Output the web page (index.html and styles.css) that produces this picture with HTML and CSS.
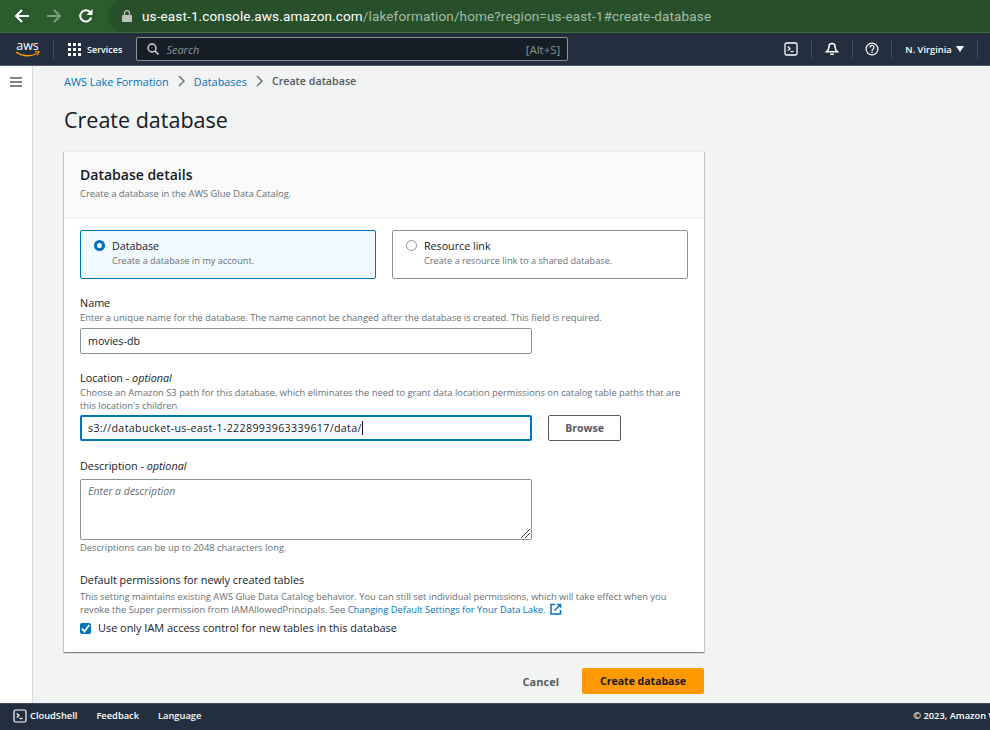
FILE: index.html
```html
<!DOCTYPE html>
<html lang="en">
<head>
<meta charset="utf-8">
<title>Create database</title>
<link rel="stylesheet" href="styles.css">
</head>
<body>
<div class="chrome">
  <svg class="chrome-ico back" width="16" height="16" viewBox="0 0 16 16"><path d="M15 8H2M8 2L2 8l6 6" fill="none" stroke="#fff" stroke-width="2"/></svg>
  <svg class="chrome-ico fwd" width="16" height="16" viewBox="0 0 16 16"><path d="M1 8h13M8 2l6 6-6 6" fill="none" stroke="#7d9b80" stroke-width="2"/></svg>
  <svg class="chrome-ico reload" width="16" height="16" viewBox="0 0 16 16"><path d="M13.2 9.5A5.6 5.6 0 1 1 12 4.2" fill="none" stroke="#fff" stroke-width="2"/><path d="M14.5 1v6h-6z" fill="#fff"/></svg>
  <div class="omnibox">
    <svg width="10" height="12" viewBox="0 0 10 12"><path d="M1 5h8a1 1 0 0 1 1 1v5a1 1 0 0 1-1 1H1a1 1 0 0 1-1-1V6a1 1 0 0 1 1-1z" fill="#b8c4b9"/><path d="M2.5 5V3.2a2.5 2.5 0 0 1 5 0V5" fill="none" stroke="#b8c4b9" stroke-width="1.3"/></svg>
    <span class="url"><span class="host">us-east-1.console.aws.amazon.com</span>/lakeformation/home?region=us-east-1#create-database</span>
  </div>
</div>
<header class="nav">
  <div class="aws">
    <span class="aws-word">aws</span>
    <svg class="aws-smile" width="25" height="7" viewBox="0 0 25 7"><path d="M1 1c6 4.500 15 5 21 1.500" fill="none" stroke="#f90" stroke-width="1.400"/><path d="M20 .8l4-.3-1.500 3.700" fill="none" stroke="#f90" stroke-width="1.200"/></svg>
  </div>
  <span class="nav-sep sep-a"></span>
  <svg class="grid-ico" width="13" height="13" viewBox="0 0 13 13"><g fill="#fff"><rect width="3" height="3"/><rect x="5" width="3" height="3"/><rect x="10" width="3" height="3"/><rect y="5" width="3" height="3"/><rect x="5" y="5" width="3" height="3"/><rect x="10" y="5" width="3" height="3"/><rect y="10" width="3" height="3"/><rect x="5" y="10" width="3" height="3"/><rect x="10" y="10" width="3" height="3"/></g></svg>
  <span class="services">Services</span>
  <div class="search">
    <svg width="12" height="12" viewBox="0 0 12 12"><circle cx="5" cy="5" r="4" fill="none" stroke="#d5dbdb" stroke-width="1.400"/><path d="M8 8l3.500 3.500" stroke="#d5dbdb" stroke-width="1.500"/></svg>
    <span class="search-ph">Search</span>
    <span class="search-key">[Alt+S]</span>
  </div>
  <div class="nav-right">
    <span class="nav-item item-shell">
      <svg width="14" height="14" viewBox="0 0 14 14"><rect x="1" y="1" width="12" height="12" rx="1.500" fill="none" stroke="#fff" stroke-width="1.300"/><path d="M3.800 4.500L6 6.500 3.800 8.500" fill="none" stroke="#fff" stroke-width="1.200"/><path d="M6.500 9.500h3" stroke="#fff" stroke-width="1.200"/></svg>
    </span>
    <span class="nav-sep"></span>
    <span class="nav-item item-bell">
      <svg width="14" height="14" viewBox="0 0 14 14"><path d="M7 1.500a3 3 0 0 1 3 3c0 3 .8 4 2.300 5.200H1.700C3.200 8.500 4 7.500 4 4.500a3 3 0 0 1 3-3z" fill="none" stroke="#fff" stroke-width="1.500"/><path d="M5.200 11.500h3.600v1.500H5.200z" fill="#fff"/></svg>
    </span>
    <span class="nav-sep"></span>
    <span class="nav-item item-help">
      <svg width="14" height="14" viewBox="0 0 14 14"><circle cx="7" cy="7" r="5.900" fill="none" stroke="#fff" stroke-width="1.200"/><path d="M5 5.500a2 2 0 1 1 3 1.700c-.7.400-1 .8-1 1.500" fill="none" stroke="#fff" stroke-width="1.300"/><rect x="6.300" y="9.600" width="1.400" height="1.400" fill="#fff"/></svg>
    </span>
    <span class="nav-sep"></span>
    <span class="region">N. Virginia<svg class="caret" width="8" height="6" viewBox="0 0 8 6"><path d="M0 0h8L4 6z" fill="#fff"/></svg></span>
    <span class="nav-sep"></span>
  </div>
</header>
<div class="body-row">
  <aside class="side">
    <svg width="12" height="10" viewBox="0 0 12 10"><path d="M0 1h12M0 5h12M0 9h12" stroke="#545b64" stroke-width="1.600"/></svg>
  </aside>
  <main class="main">
    <nav class="crumbs">
      <a class="crumb-link">AWS Lake Formation</a>
      <svg class="chev" width="7" height="12" viewBox="0 0 7 12"><path d="M1 1l5 5-5 5" fill="none" stroke="#687078" stroke-width="1.500"/></svg>
      <a class="crumb-link">Databases</a>
      <svg class="chev" width="7" height="12" viewBox="0 0 7 12"><path d="M1 1l5 5-5 5" fill="none" stroke="#687078" stroke-width="1.500"/></svg>
      <span class="crumb-cur">Create database</span>
    </nav>
    <h1 class="title">Create database</h1>
    <section class="card">
      <div class="card-head">
        <h2 class="card-title">Database details</h2>
        <p class="hint">Create a database in the AWS Glue Data Catalog.</p>
      </div>
      <div class="card-body">
        <div class="tiles">
          <div class="tile tile-on">
            <span class="radio radio-on"></span>
            <div><div class="tile-label">Database</div><div class="hint tile-hint">Create a database in my account.</div></div>
          </div>
          <div class="tile">
            <span class="radio"></span>
            <div><div class="tile-label">Resource link</div><div class="hint tile-hint">Create a resource link to a shared database.</div></div>
          </div>
        </div>
        <div class="field f-name">
          <div class="label">Name</div>
          <p class="hint">Enter a unique name for the database. The name cannot be changed after the database is created. This field is required.</p>
          <div class="input">movies-db</div>
        </div>
        <div class="field f-loc">
          <div class="label">Location - <i>optional</i></div>
          <p class="hint">Choose an Amazon S3 path for this database, which eliminates the need to grant data location permissions on catalog table paths that are<br>this location's children</p>
          <div class="loc-row">
            <div class="input input-focus">s3://databucket-us-east-1-2228993963339617/data/<span class="cursor"></span></div>
            <span class="btn-browse">Browse</span>
          </div>
        </div>
        <div class="field f-desc">
          <div class="label">Description - <i>optional</i></div>
          <div class="textarea">Enter a description
            <svg class="grip" width="9" height="9" viewBox="0 0 9 9"><path d="M0 9l9-9M4 9l5-5" stroke="#444" stroke-width="1"/></svg>
          </div>
          <p class="hint d-hint">Descriptions can be up to 2048 characters long.</p>
        </div>
        <div class="field f-perm">
          <div class="label">Default permissions for newly created tables</div>
          <p class="hint">This setting maintains existing AWS Glue Data Catalog behavior. You can still set individual permissions, which will take effect when you<br>revoke the Super permission from IAMAllowedPrincipals. See <a class="link">Changing Default Settings for Your Data Lake.</a>
            <svg class="ext" width="12" height="12" viewBox="0 0 12 12"><path d="M5 1.500H1v9.500h9.500V7" fill="none" stroke="#0073bb" stroke-width="1.500"/><path d="M4.500 7.500L10 2" stroke="#0073bb" stroke-width="1.500"/><path d="M6.500 .7h4.800v4.800z" fill="#0073bb"/></svg>
          </p>
          <div class="check-row">
            <span class="check"><svg width="11" height="11" viewBox="0 0 11 11"><path d="M1.800 5.500L4.500 8.500 9.200 2" fill="none" stroke="#fff" stroke-width="1.800"/></svg></span>
            <span class="check-label">Use only IAM access control for new tables in this database</span>
          </div>
        </div>
      </div>
    </section>
    <div class="actions">
      <span class="btn-cancel">Cancel</span>
      <span class="btn-primary">Create database</span>
    </div>
  </main>
</div>
<footer class="foot">
  <span class="foot-shell">
    <svg width="14" height="14" viewBox="0 0 14 14"><rect x="1" y="1" width="12" height="12" rx="1.500" fill="none" stroke="#fff" stroke-width="1.200"/><path d="M3.800 4.500L6 6.500 3.800 8.500" fill="none" stroke="#fff" stroke-width="1.200"/><path d="M6.500 9.500h3" stroke="#fff" stroke-width="1.200"/></svg>
    CloudShell
  </span>
  <span class="foot-link">Feedback</span>
  <span class="foot-link">Language</span>
  <span class="copy">© 2023, Amazon Web Services, Inc. or its affiliates.</span>
</footer>
</body>
</html>
```
FILE: styles.css
```css
* { box-sizing: border-box; }
html, body { margin: 0; padding: 0; }
body {
  width: 990px; height: 730px; overflow: hidden;
  display: flex; flex-direction: column;
  font-family: "Open Sans", "Noto Sans", sans-serif;
  color: #16191f; background: #f2f3f3;
}
p { margin: 0; }

.chrome {
  height: 33px; flex: none; display: flex; align-items: center;
  background: #2a5c2e; border-bottom: 1px solid #3d7040;
}
.chrome-ico { flex: none; }
.back { margin-left: 14px; }
.fwd { margin-left: 16px; }
.reload { margin-left: 16px; }
.omnibox {
  flex: 1; height: 32px; margin-left: 14px; padding-left: 14px;
  display: flex; align-items: center; gap: 10px;
  background: #274f2a; border-radius: 16px 0 0 16px;
}
.url { font: 13.55px "Roboto", sans-serif; color: #a5bca6; white-space: nowrap; letter-spacing: .12px; }
.host { color: #fff; }

.nav {
  height: 33px; flex: none; display: flex; align-items: center;
  background: #232f3e; color: #fff; border-bottom: 1px solid #545b64;
}
.aws { width: 25px; margin-left: 15px; display: flex; flex-direction: column; align-items: center; height: 20px; }
.aws-word { font: 12.500px/13px "Open Sans", sans-serif; }
.aws-smile { margin-top: -1px; }
.nav-sep { width: 1px; height: 19px; background: #414d5c; flex: none; }
.sep-a { margin-left: 13px; }
.grid-ico { margin-left: 14px; }
.services { margin-left: 6px; font-size: 9px; font-weight: 600; }
.search {
  width: 432px; height: 24px; margin-left: 14px;
  display: flex; align-items: center; padding: 0 7px 0 10px;
  background: #161d26; border: 1px solid #879596; border-radius: 2px;
}
.search-ph { margin-left: 7px; font-size: 11px; font-style: italic; color: #879596; }
.search-key { margin-left: auto; font-size: 11.500px; color: #879596; }
.nav-right { margin-left: auto; padding-right: 12px; display: flex; align-items: center; }
.nav-item { display: flex; width: 40px; justify-content: center; }
.item-help { width: 38px; }
.item-shell { width: auto; margin-right: 13px; }
.region { width: 85px; display: flex; align-items: center; justify-content: center; gap: 4px; font-size: 9.300px; font-weight: 600; }
.caret { flex: none; }

.body-row { flex: 1; min-height: 0; display: flex; }
.side {
  width: 33px; flex: none; background: #fff; border-right: 1px solid #d5dbdb;
  padding: 11px 0 0 10px;
}
.side svg { display: block; }
.main { flex: 1; min-width: 0; padding: 0 0 0 31px; }
.crumbs { height: 30px; display: flex; align-items: center; gap: 9px; font-size: 10.900px; }
.crumb-link { color: #0073bb; }
.crumb-cur { color: #545b64; font-weight: 600; font-size: 10.700px; }
.title { margin: 10px 0 17px; font-size: 21.500px; line-height: 28px; font-weight: 400; color: #16191f; }

.card {
  width: 640px; background: #fff; border-top: 1px solid #eaeded;
  box-shadow: 0 1px 1px 0 rgba(0,28,36,.3), 1px 1px 1px 0 rgba(0,28,36,.15), -1px 1px 1px 0 rgba(0,28,36,.15);
}
.card-head { height: 66px; padding: 14px 16px 0; background: #fafafa; border-bottom: 1px solid #eaeded; }
.card-title { margin: 0; font-size: 14px; line-height: 18px; font-weight: 600; }
.hint { font-size: 9.350px; line-height: 13px; color: #687078; white-space: nowrap; }
.card-head .hint { margin-top: 3px; }
.card-body { padding: 12px 16px 0; height: 434px; }

.tiles { display: flex; gap: 16px; }
.tile {
  flex: 1; height: 49px; padding: 9px 13px; display: flex; gap: 7px;
  border: 1px solid #879596; border-radius: 2px; background: #fff;
}
.tile-on { background: #f1faff; border-color: #0073bb; }
.radio { width: 11px; height: 11px; flex: none; border-radius: 50%; border: 1px solid #879596; background: #fff; }
.radio-on { border: 3.500px solid #0073bb; }
.tile-label { font-size: 10.700px; line-height: 13px; color: #16191f; }
.tile-hint { font-size: 9.200px; margin-top: 1px; }

.label { font-size: 10.800px; line-height: 13px; color: #16191f; }
.field .hint { margin-top: 2px; }
.f-name { margin-top: 17px; }
.f-loc { margin-top: 17px; }
.f-desc { margin-top: 18px; }
.f-perm { margin-top: 19px; }
.input {
  width: 452px; height: 26px; margin-top: 4px; padding: 0 7px;
  display: flex; align-items: center;
  font-size: 10.700px; border: 1px solid #879596; border-radius: 2px; background: #fff;
}
.input-focus { border: 2px solid #0073bb; padding: 0 6px; margin-top: 0; letter-spacing: .33px; }
.cursor { width: 1px; height: 14px; background: #16191f; }
.loc-row { display: flex; align-items: center; gap: 16px; margin-top: 3px; }
.btn-browse {
  width: 73px; height: 26px; display: flex; align-items: center; justify-content: center;
  border: 1px solid #545b64; border-radius: 2px; font-size: 10.500px; font-weight: 700; color: #545b64;
}
.textarea {
  position: relative; width: 452px; height: 61px; margin-top: 7px; padding: 4px 7px;
  font-size: 10.500px; font-style: italic; line-height: 14px; color: #687078;
  border: 1px solid #879596; border-radius: 2px;
}
.grip { position: absolute; right: 1px; bottom: 1px; }
.field .d-hint { margin-top: 1px; }
.f-perm .hint { margin-top: 4px; }
.link { color: #0073bb; }
.ext { vertical-align: -2px; margin-left: 2px; }
.check-row { display: flex; align-items: center; gap: 7px; margin-top: 5px; }
.check { width: 11px; height: 11px; display: flex; align-items: center; justify-content: center; background: #0073bb; border-radius: 2px; }
.check-label { font-size: 10.900px; line-height: 14px; }

.actions { width: 640px; margin-top: 16px; display: flex; justify-content: flex-end; align-items: center; gap: 23px; }
.btn-cancel { font-size: 11px; font-weight: 700; color: #545b64; }
.btn-primary {
  width: 122px; height: 26px; display: flex; align-items: center; justify-content: center;
  background: #f90; border-radius: 2px; font-size: 10.500px; font-weight: 700; color: #16191f;
}

.foot {
  height: 27px; flex: none; display: flex; align-items: center; padding: 0 0 3px 13px;
  background: #232f3e; color: #fff; font-size: 9.300px; font-weight: 600; border-top: 1px solid #414d5c;
  white-space: nowrap; overflow: hidden;
}
.foot-shell { display: flex; align-items: center; gap: 3px; }
.foot-link { margin-left: 19px; }
.copy { margin-left: 712px; flex: none; }
```
